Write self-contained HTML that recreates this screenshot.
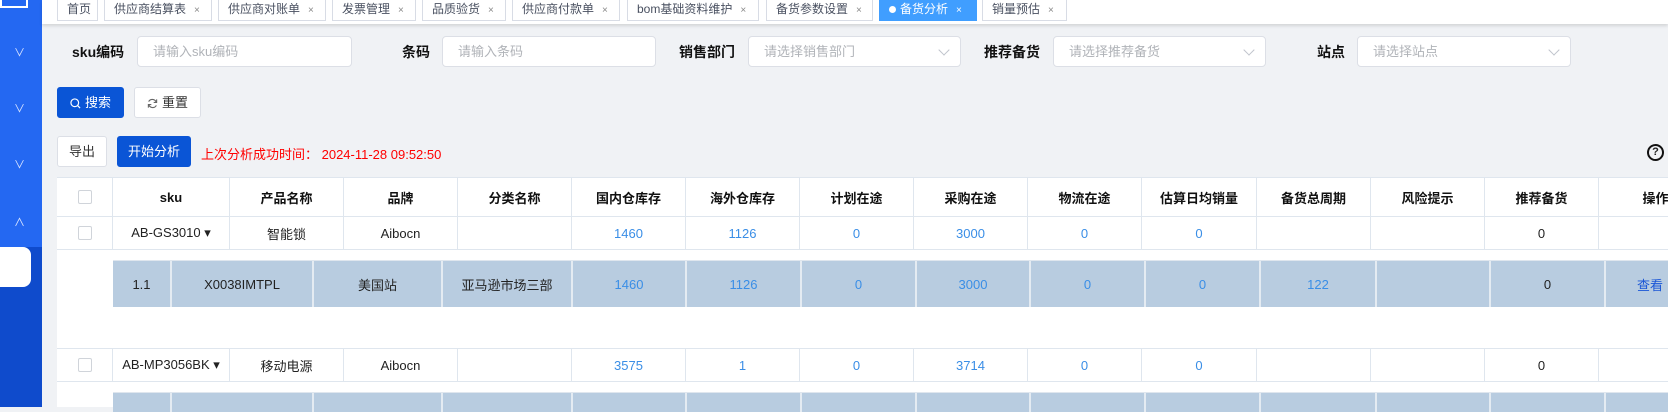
<!DOCTYPE html>
<html><head><meta charset="utf-8"><style>
*{box-sizing:border-box;margin:0;padding:0}
body{width:1668px;height:407px;overflow:hidden;background:#f0f2f5;font-family:"Liberation Sans","Noto Sans CJK SC",sans-serif;font-size:13px;color:#222;position:relative}
.a{position:absolute}
.side{left:0;top:0;width:42px;height:407px;background:#0f4bcc}
.side .top{left:0;top:0;width:42px;height:247px;background:#2468f2}
.chev{color:#dfe8ff;font-size:11px;left:14px}
.topbar{left:42px;top:0;width:1626px;height:24px;background:#fff;box-shadow:0 2px 3px rgba(0,0,0,.12)}
.tab{top:0;height:21px;border:1px solid #d8dce5;border-top:none;background:#fff;font-size:12px;color:#495060;line-height:19px;padding-left:9px;white-space:nowrap}
.tab i{font-style:normal;font-size:10px;color:#888;margin-left:8px}
.tab.act{background:#409eff;border-color:#409eff;color:#fff}
.tab.act i{color:#fff}
.lbl{font-weight:bold;font-size:14px;color:#111;top:42px}
.inp{top:36px;height:31px;background:#fff;border:1px solid #dcdfe6;border-radius:4px;color:#b0b3b8;font-size:13px;line-height:29px;padding-left:15px}
.inp .ar{position:absolute;right:12px;top:9px;width:8px;height:8px;border-right:1px solid #c0c4cc;border-bottom:1px solid #c0c4cc;transform:rotate(45deg)}
.btn{height:31px;border-radius:3px;font-size:13px;line-height:29px;text-align:center;border:1px solid #dcdfe6;background:#fff;color:#333}
.btn.p{background:#0a55d6;border-color:#0a55d6;color:#fff}
.btn svg{vertical-align:-2px;margin-right:4px}
.tbl{left:57px;top:177px;width:1611px;height:230px;background:#fff}
.row{position:absolute;left:0;width:1611px;display:flex;border-bottom:1px solid #dfe6ee}
.row div{border-right:1px solid #dfe6ee;text-align:center;flex:none;display:flex;align-items:center;justify-content:center}
.hd div{font-weight:bold;font-size:13px;color:#111}
.b{color:#3a8ee6}
.sub{position:absolute;left:56px;display:flex;background:#b8cce0;border-top:1px solid #dfe6ee}
.sub div{border-right:2px solid #e4ebf2;flex:none;text-align:center;display:flex;align-items:center;justify-content:center}
.cb{width:14px;height:14px;border:1px solid #d0d4da;border-radius:2px;background:#fff}
</style></head><body>
<div class="a side"><div class="a top"></div>
<div class="a" style="left:0;top:0;width:28px;height:8px;border:2px solid #fff;border-top:none"></div>
<div class="a chev" style="top:44px">&#x2228;</div>
<div class="a chev" style="top:100px">&#x2228;</div>
<div class="a chev" style="top:156px">&#x2228;</div>
<div class="a chev" style="top:214px">&#x2227;</div>
<div class="a" style="left:0;top:247px;width:31px;height:40px;background:#fff;border-radius:0 8px 8px 0"></div>
</div>
<div class="a topbar"></div>
<div class="a tab" style="left:57px;width:41px">首页</div>
<div class="a tab" style="left:104px;width:108px">供应商结算表<i>×</i></div>
<div class="a tab" style="left:218px;width:108px">供应商对账单<i>×</i></div>
<div class="a tab" style="left:332px;width:84px">发票管理<i>×</i></div>
<div class="a tab" style="left:422px;width:84px">品质验货<i>×</i></div>
<div class="a tab" style="left:512px;width:108px">供应商付款单<i>×</i></div>
<div class="a tab" style="left:627px;width:132px">bom基础资料维护<i>×</i></div>
<div class="a tab" style="left:766px;width:107px">备货参数设置<i>×</i></div>
<div class="a tab act" style="left:879px;width:98px"><span style="display:inline-block;width:7px;height:7px;border-radius:50%;background:#fff;margin-right:4px"></span>备货分析<i>×</i></div>
<div class="a tab" style="left:982px;width:85px">销量预估<i>×</i></div>

<div class="a lbl" style="left:72px">sku编码</div>
<div class="a inp" style="left:137px;width:215px">请输入sku编码</div>
<div class="a lbl" style="left:402px">条码</div>
<div class="a inp" style="left:442px;width:214px">请输入条码</div>
<div class="a lbl" style="left:679px">销售部门</div>
<div class="a inp" style="left:748px;width:213px">请选择销售部门<span class="ar"></span></div>
<div class="a lbl" style="left:984px">推荐备货</div>
<div class="a inp" style="left:1053px;width:213px">请选择推荐备货<span class="ar"></span></div>
<div class="a lbl" style="left:1317px">站点</div>
<div class="a inp" style="left:1357px;width:214px">请选择站点<span class="ar"></span></div>

<div class="a btn p" style="left:57px;top:87px;width:67px"><svg width="11" height="11" viewBox="0 0 12 12"><circle cx="5.2" cy="5.2" r="4.2" fill="none" stroke="#fff" stroke-width="1.3"/><path d="M8.3 8.3L11 11" stroke="#fff" stroke-width="1.3"/></svg>搜索</div>
<div class="a btn" style="left:134px;top:87px;width:67px"><svg width="11" height="11" viewBox="0 0 12 12"><path d="M10 4.5A4.5 4.5 0 0 0 1.8 4M2 7.5A4.5 4.5 0 0 0 10.2 8" fill="none" stroke="#666" stroke-width="1.2"/><path d="M10.5 1.5V4.8H7.3M1.5 10.5V7.2H4.7" fill="none" stroke="#666" stroke-width="1.2"/></svg>重置</div>
<div class="a btn" style="left:57px;top:136px;width:50px">导出</div>
<div class="a btn p" style="left:117px;top:136px;width:74px">开始分析</div>
<div class="a" style="left:201px;top:144px;color:#f00;font-size:13px">上次分析成功时间：&nbsp;2024-11-28 09:52:50</div>
<div class="a" style="left:1647px;top:144px;width:17px;height:17px;border:2px solid #111;border-radius:50%;font-size:11px;font-weight:bold;text-align:center;line-height:13px">?</div>

<div class="a tbl">
<div class="row hd" style="top:0;height:40px;border-top:1px solid #dfe6ee">
<div style="width:56px"><span class="cb"></span></div><div style="width:117px">sku</div><div style="width:114px">产品名称</div><div style="width:114px">品牌</div><div style="width:114px">分类名称</div><div style="width:114px">国内仓库存</div><div style="width:114px">海外仓库存</div><div style="width:114px">计划在途</div><div style="width:114px">采购在途</div><div style="width:114px">物流在途</div><div style="width:115px">估算日均销量</div><div style="width:114px">备货总周期</div><div style="width:114px">风险提示</div><div style="width:114px">推荐备货</div><div style="width:114px">操作</div></div>
<div class="row" style="top:40px;height:33px">
<div style="width:56px"><span class="cb"></span></div><div style="width:117px">AB-GS3010 ▾</div><div style="width:114px">智能锁</div><div style="width:114px">Aibocn</div><div style="width:114px"></div><div style="width:114px" class="b">1460</div><div style="width:114px" class="b">1126</div><div style="width:114px" class="b">0</div><div style="width:114px" class="b">3000</div><div style="width:114px" class="b">0</div><div style="width:115px" class="b">0</div><div style="width:114px"></div><div style="width:114px"></div><div style="width:114px">0</div><div style="width:114px"></div></div>
<div class="sub" style="top:83px;height:47px">
<div style="width:59px">1.1</div><div style="width:142px">X0038IMTPL</div><div style="width:129px">美国站</div><div style="width:130px">亚马逊市场三部</div><div style="width:114px" class="b">1460</div><div style="width:115px" class="b">1126</div><div style="width:115px" class="b">0</div><div style="width:114px" class="b">3000</div><div style="width:115px" class="b">0</div><div style="width:115px" class="b">0</div><div style="width:116px" class="b">122</div><div style="width:114px"></div><div style="width:115px">0</div><div style="width:70px;color:#1a56d6;justify-content:flex-start;padding-left:31px;border:none">查看</div></div>
<div class="row" style="top:171px;height:34px;border-top:1px solid #dfe6ee">
<div style="width:56px"><span class="cb"></span></div><div style="width:117px">AB-MP3056BK ▾</div><div style="width:114px">移动电源</div><div style="width:114px">Aibocn</div><div style="width:114px"></div><div style="width:114px" class="b">3575</div><div style="width:114px" class="b">1</div><div style="width:114px" class="b">0</div><div style="width:114px" class="b">3714</div><div style="width:114px" class="b">0</div><div style="width:115px" class="b">0</div><div style="width:114px"></div><div style="width:114px"></div><div style="width:114px">0</div><div style="width:114px"></div></div>
<div class="sub" style="top:215px;height:20px;width:1560px">
<div style="width:59px"></div><div style="width:142px"></div><div style="width:129px"></div><div style="width:130px"></div><div style="width:114px"></div><div style="width:115px"></div><div style="width:115px"></div><div style="width:114px"></div><div style="width:115px"></div><div style="width:115px"></div><div style="width:116px"></div><div style="width:114px"></div><div style="width:115px"></div><div style="width:114px"></div></div>
</div>
</body></html>
